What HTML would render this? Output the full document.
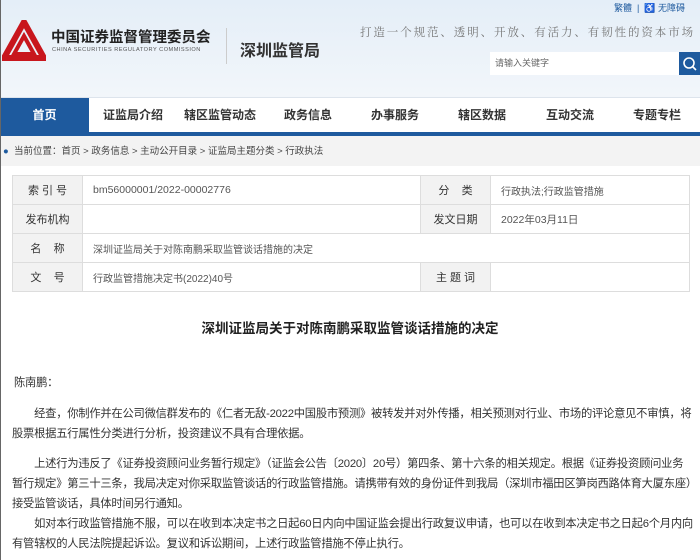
<!DOCTYPE html>
<html><head><meta charset="utf-8"><style>
*{margin:0;padding:0;box-sizing:border-box}
body{width:700px;height:560px;overflow:hidden;font-family:"Liberation Sans","Noto Sans CJK SC",sans-serif;background:#fff;position:relative;color:#333}
.hdr{position:absolute;left:0;top:0;width:700px;height:97px;background:linear-gradient(180deg,#e4eef8,#f2f6fa)}
.nav{position:absolute;left:0;top:97px;width:700px;height:35px;background:#fff;border-top:1px solid #dde4ec}
.nav div{position:absolute;top:0;height:35px;line-height:35px;font-size:12px;color:#333;text-align:center;width:88px;font-weight:bold}
.navline{position:absolute;left:0;top:132px;width:700px;height:4px;background:#1e5a9e}
.bc{position:absolute;left:0;top:136px;width:700px;height:30px;background:#f3f3f3;font-size:9.5px;line-height:32px;padding-left:14px;color:#444}
table{position:absolute;left:12px;top:175px;width:678px;border-collapse:collapse;font-size:10px}
td{border:1px solid #ddd;height:29px;padding-left:10px;color:#555}
td.l{background:#f2f2f2;width:70px;text-align:center;padding:0;color:#333;font-size:11px}
.t{position:absolute;top:317px;left:0;width:700px;text-align:center;font-size:13.5px;font-weight:bold;color:#222}
.p{position:absolute;left:12px;width:682px;font-size:11.3px;line-height:20px;color:#333;letter-spacing:-0.25px}
</style></head><body>
<div style="position:absolute;left:0;top:0;width:1px;height:560px;background:#666;z-index:5"></div>
<div class="hdr"></div>
<svg style="position:absolute;left:2px;top:20px" width="44" height="42" viewBox="0 0 44 42"><path d="M22 2 L42 38 L2 38 Z" fill="none" stroke="#c8161d" stroke-width="6"/><path d="M22 16 L32 34 L12 34 Z" fill="none" stroke="#c8161d" stroke-width="4"/></svg>
<div style="position:absolute;left:51px;top:26px;font-size:14.5px;font-weight:bold;color:#222">中国证券监督管理委员会</div>
<div style="position:absolute;left:52px;top:47px;font-size:5.6px;color:#555;letter-spacing:0.5px">CHINA SECURITIES REGULATORY COMMISSION</div>
<div style="position:absolute;left:226px;top:28px;width:1px;height:36px;background:#ccc"></div>
<div style="position:absolute;left:240px;top:37px;font-size:16px;font-weight:bold;color:#333">深圳监管局</div>
<div style="position:absolute;left:614px;top:1px;font-size:9px;color:#1e5a9e">繁體 &nbsp;| &nbsp;♿ 无障碍</div>
<div style="position:absolute;left:360px;top:24px;font-size:11.5px;color:#777;font-family:'Noto Serif CJK SC',serif;white-space:nowrap;letter-spacing:1.9px">打造一个规范、透明、开放、有活力、有韧性的资本市场</div>
<div style="position:absolute;left:490px;top:52px;width:189px;height:23px;background:#fff;font-size:9px;line-height:23px;padding-left:5px;color:#666">请输入关键字</div>
<div style="position:absolute;left:679px;top:52px;width:21px;height:23px;background:#1e5a9e"><svg width="21" height="23"><circle cx="10" cy="11" r="5" fill="none" stroke="#fff" stroke-width="1.6"/><path d="M14 15l3 3" stroke="#fff" stroke-width="1.6"/></svg></div>
<div class="nav">
<div style="left:0;width:89px;background:#1e5a9e;color:#fff">首页</div>
<div style="left:89px">证监局介绍</div><div style="left:176px">辖区监管动态</div><div style="left:264px">政务信息</div><div style="left:351px">办事服务</div><div style="left:438px">辖区数据</div><div style="left:526px">互动交流</div><div style="left:613px">专题专栏</div>
</div>
<div class="navline"></div>
<div class="bc"><span style="color:#1e5a9e;position:absolute;left:3px">●</span>当前位置：首页 &gt; 政务信息 &gt; 主动公开目录 &gt; 证监局主题分类 &gt; 行政执法</div>
<table>
<tr><td class="l">索 引 号</td><td style="width:338px;font-size:10.5px">bm56000001/2022-00002776</td><td class="l">分 &nbsp; &nbsp;类</td><td>行政执法;行政监管措施</td></tr>
<tr><td class="l">发布机构</td><td></td><td class="l">发文日期</td><td style="font-size:10.5px">2022年03月11日</td></tr>
<tr><td class="l">名 &nbsp; &nbsp;称</td><td colspan="3">深圳证监局关于对陈南鹏采取监管谈话措施的决定</td></tr>
<tr><td class="l">文 &nbsp; &nbsp;号</td><td>行政监管措施决定书(2022)40号</td><td class="l">主 题 词</td><td></td></tr>
</table>
<div class="t">深圳证监局关于对陈南鹏采取监管谈话措施的决定</div>
<div class="p" style="top:373px;left:14px">陈南鹏：</div>
<div class="p" style="top:404px">&emsp;&emsp;经查，你制作并在公司微信群发布的《仁者无敌-2022中国股市预测》被转发并对外传播，相关预测对行业、市场的评论意见不审慎，将股票根据五行属性分类进行分析，投资建议不具有合理依据。</div>
<div class="p" style="top:454px">&emsp;&emsp;上述行为违反了《证券投资顾问业务暂行规定》（证监会公告〔2020〕20号）第四条、第十六条的相关规定。根据《证券投资顾问业务暂行规定》第三十三条，我局决定对你采取监管谈话的行政监管措施。请携带有效的身份证件到我局（深圳市福田区笋岗西路体育大厦东座）接受监管谈话，具体时间另行通知。</div>
<div class="p" style="top:514px">&emsp;&emsp;如对本行政监管措施不服，可以在收到本决定书之日起60日内向中国证监会提出行政复议申请，也可以在收到本决定书之日起6个月内向有管辖权的人民法院提起诉讼。复议和诉讼期间，上述行政监管措施不停止执行。</div>
</body></html>
